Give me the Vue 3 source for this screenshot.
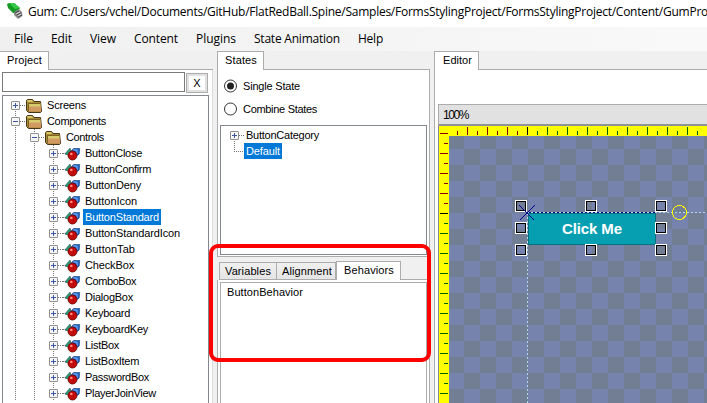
<script setup>
const menu = [
  { t: 'File', w: 19, g: 18 }, { t: 'Edit', w: 21, g: 18 }, { t: 'View', w: 26, g: 18 },
  { t: 'Content', w: 44, g: 18 }, { t: 'Plugins', w: 40, g: 18 },
  { t: 'State Animation', w: 86, g: 18 }, { t: 'Help', w: 25, g: 0 }
]
const tree = [
  { t: 'Screens', d: 0, w: 39, folder: true, first: true },
  { t: 'Components', d: 0, w: 59, folder: true, open: true },
  { t: 'Controls', d: 1, w: 38, folder: true, open: true },
  ...[['ButtonClose', 57], ['ButtonConfirm', 66], ['ButtonDeny', 56], ['ButtonIcon', 52],
    ['ButtonStandard', 74], ['ButtonStandardIcon', 95], ['ButtonTab', 50], ['CheckBox', 49],
    ['ComboBox', 51], ['DialogBox', 48], ['Keyboard', 45], ['KeyboardKey', 63], ['ListBox', 34],
    ['ListBoxItem', 54], ['PasswordBox', 64], ['PlayerJoinView', 71]].map(([t, w]) => ({ t, d: 2, w, sel: t === 'ButtonStandard' }))
]
// Spreads the letters so that a label takes the given width.
const vFit = {
  mounted(el, { value }) {
    const w = el.getBoundingClientRect().width
    el.style.letterSpacing = (value - w) / el.textContent.length + 'px'
  }
}
const tone = n => (n < 0 ? '#8b0000' : n > 0 ? '#006400' : '#000')
const ticks = (from, to) => Array.from({ length: to - from + 1 }, (_, i) => {
  const n = from + i
  return { n, at: n * 10, major: n % 2 === 0, c: tone(n) }
})
const xt = ticks(-7, 17)
const yt = ticks(-8, 18)
const handles = [[515, 200], [585, 200], [655, 200], [515, 222], [655, 222], [515, 244], [585, 244], [655, 244]]
</script>

<template>
  <div class="app">
    <header class="title">
      <svg width="17" height="18" viewBox="0 0 17 18">
        <path d="M0 2 L2 1 L7 1 L13 6 L9 12 L6 11 L1 6 Z" fill="#129a22" />
        <path d="M2 1 L7 1 L13 6 L8 7 Z" fill="#35c845" />
        <path d="M7 10 L12 7 L15 10 L15.500 14 L11 17 L7 13 Z" fill="#8c8c8c" />
        <path d="M8 11 L12 9 M9 13 L14 11 M11 15 L15 13" stroke="#444" />
        <path d="M9 12 L13 10 M11 14 L14 12" stroke="#ddd" />
      </svg>
      <span v-fit="680" class="fit">Gum: C:/Users/vchel/Documents/GitHub/FlatRedBall.Spine/Samples/FormsStylingProject/FormsStylingProject/Content/GumPro</span>
    </header>
    <nav class="menu">
      <span v-for="m in menu" :key="m.t" v-fit="m.w" class="fit" :style="{ marginRight: m.g + 'px' }">{{ m.t }}</span>
    </nav>
    <main class="body">
      <section class="col project">
        <div class="tabs"><div class="tab t1"><span v-fit="35" class="fit">Project</span></div><i /></div>
        <div class="panel">
          <div class="search">
            <div class="input" />
            <div class="clear"><b>X</b></div>
          </div>
          <div class="tree">
            <div v-for="r in tree" :key="r.t" class="row">
              <svg v-for="k in r.d" :key="k" width="19" height="16"><path d="M9.5 0V16" class="dot" /></svg>
              <svg width="19" height="16">
                <path :d="r.first ? 'M9.5 12V16' : 'M9.5 0V16'" class="dot" />
                <path d="M14 8.5H19" class="dot" />
                <rect x="5.5" y="4.5" width="8" height="8" rx=".5" fill="#f6f6f6" stroke="#919191" />
                <path :d="r.open ? 'M7 8.5H12' : 'M7 8.5H12M9.5 6V11'" stroke="#3b56a0" />
              </svg>
              <svg v-if="r.folder" width="20" height="16">
                <path d="M1.5 3.5L2.5 2.5H7.500L9 4.500H15.500L16.500 14.500L15.500 15.500H3.500L1.500 13.500Z" fill="#a58a35" stroke="#4a3616" />
                <path d="M2.500 3H7L8 5H2.500Z" fill="#d9c766" />
                <path d="M4 6H15.500V10H4Z" fill="#d8cb6d" />
                <path d="M4 9.500H16V14.500H4Z" fill="#d29a63" />
                <path d="M3.500 14.500V6.500H15.500" fill="none" stroke="#7c6324" />
              </svg>
              <svg v-else width="20" height="16">
                <path d="M0 8.5H2" class="dot" />
                <path d="M1.800 9L7 3.200L8.500 9L6 10Z" fill="#2f9f7a" stroke="#124f40" stroke-width=".7" />
                <path d="M8.500 5.500L10.500 3.500H16.700L16.200 9L13.500 11H9Z" fill="#1f66cc" stroke="#12346f" stroke-width=".6" />
                <path d="M10 5H14V9" stroke="#7db8f2" fill="none" />
                <circle cx="9.500" cy="10.500" r="4.500" fill="#c40a0a" stroke="#5d0505" stroke-width=".8" />
                <circle cx="8.300" cy="9" r="1.300" fill="#ff8a80" />
              </svg>
              <div class="label" :class="{ sel: r.sel }"><span v-fit="r.w" class="fit">{{ r.t }}</span></div>
            </div>
          </div>
        </div>
      </section>

      <section class="col middle">
        <div class="tabs"><div class="tab t2"><span v-fit="32" class="fit">States</span></div><i /></div>
        <div class="panel states">
          <div class="radio"><svg width="14" height="14"><circle cx="6.500" cy="7" r="6" fill="#fff" stroke="#333" /><circle cx="6.500" cy="7" r="3.500" fill="#222" /></svg><span v-fit="57" class="fit">Single State</span></div>
          <div class="radio"><svg width="14" height="14"><circle cx="6.500" cy="7" r="6" fill="#fff" stroke="#333" /></svg><span v-fit="74" class="fit">Combine States</span></div>
          <div class="list">
            <div class="row">
              <svg width="23" height="16">
                <path d="M13.500 12V16M18 8.500H23" class="dot" />
                <rect x="9.500" y="4.500" width="8" height="8" rx=".5" fill="#f6f6f6" stroke="#919191" />
                <path d="M11 8.500H16M13.500 6V11" stroke="#3b56a0" />
              </svg>
              <div class="label"><span v-fit="73" class="fit">ButtonCategory</span></div>
            </div>
            <div class="row">
              <svg width="23" height="16"><path d="M13.500 0V8.500H23" class="dot" /></svg>
              <div class="label sel"><span v-fit="34" class="fit">Default</span></div>
            </div>
          </div>
        </div>
        <div class="tabs low">
          <div class="off o1"><span v-fit="46" class="fit">Variables</span></div>
          <div class="off o2"><span v-fit="50" class="fit">Alignment</span></div>
          <div class="tab t4"><span v-fit="50" class="fit">Behaviors</span></div><i />
        </div>
        <div class="panel behaviors"><div class="box"><span v-fit="76" class="fit">ButtonBehavior</span></div></div>
      </section>

      <section class="col editor">
        <div class="tabs"><div class="tab t3"><span v-fit="29" class="fit">Editor</span></div><i /></div>
        <div class="panel edit">
          <div class="zoom"><span v-fit="25" class="fit">100%</span></div>
          <svg class="canvas" width="269" height="277" viewBox="438 126 269 277" shape-rendering="crispEdges">
            <defs>
              <pattern id="chk" x="448" y="133" width="32" height="32" patternUnits="userSpaceOnUse">
                <rect width="32" height="32" fill="#7683ad" />
                <rect width="16" height="16" fill="#727e94" /><rect x="16" y="16" width="16" height="16" fill="#727e94" />
              </pattern>
            </defs>
            <rect x="438" y="126" width="269" height="277" fill="url(#chk)" />
            <rect x="438" y="126" width="1" height="277" fill="#828790" />
            <rect x="439" y="126" width="268" height="10" fill="#ff0" />
            <rect x="439" y="126" width="10" height="277" fill="#ff0" />
            <rect v-for="k in xt" :key="'x' + k.n" :x="527 + k.at" :y="k.major ? 127 : 131" width="1" :height="k.major ? 8 : 4" :fill="k.c" />
            <rect v-for="k in yt" :key="'y' + k.n" :y="213 + k.at" :x="k.major ? 440 : 444" height="1" :width="k.major ? 8 : 4" :fill="k.c" />
            <rect x="528.5" y="213.5" width="127" height="31" fill="#069fb2" stroke="#05707e" />
            <path d="M527 212.500H656" stroke="#00008b" />
            <path d="M527 212.500H707M527.500 213V403" stroke="#add8e6" stroke-dasharray="2 2" />
            <g v-for="h in handles" :key="h.join()" fill="none">
              <rect :x="h[0] + .5" :y="h[1] + .5" width="11" height="11" stroke="#fff" />
              <rect :x="h[0] + 1.5" :y="h[1] + 1.5" width="9" height="9" stroke="#000" />
            </g>
            <path d="M519 205L534 220" stroke="#00008b" />
            <path d="M520 220L535 205" stroke="#00008b" stroke-width="1.400" />
            <circle cx="679.500" cy="212.500" r="7" fill="none" stroke="#ff0" />
            <text x="592" y="234" text-anchor="middle" textLength="60" class="click">Click Me</text>
          </svg>
        </div>
      </section>
    </main>
    <div class="callout" />
  </div>
</template>

<style>
body { overflow: hidden; }
</style>

<style scoped>
* { box-sizing: border-box; }
.app { position: relative; width: 707px; height: 403px; overflow: hidden; background: #f0f0f0; color: #000; font: 11px/16px "Liberation Sans", Arial, sans-serif; display: flex; flex-direction: column; }
svg { display: block; flex: none; }
.fit { display: inline-block; white-space: nowrap; flex: none; }
.title { height: 27px; flex: none; background: #fff; display: flex; padding: 2px 0 0 7px; gap: 4px; font: 12px/20px "Open Sans", "Noto Sans", sans-serif; }
.menu { height: 24px; flex: none; padding-left: 14px; display: flex; background: linear-gradient(90deg, #f0f0f0, #f9f9f9); font: 12px/24px "Open Sans", "Noto Sans", sans-serif; }
.body { flex: 1; min-height: 0; display: flex; }
.col { display: flex; flex-direction: column; flex: none; }
.project { width: 213px; margin-right: 4px; }
.middle { width: 213px; margin-right: 4px; }
.editor { width: 273px; }
.tabs { display: flex; height: 19px; flex: none; }
.tabs i { flex: 1; border-bottom: 1px solid #acacac; }
.tab { background: #fff; border: 1px solid #acacac; border-bottom: 0; line-height: 16px; height: 19px; }
.t1 { width: 49px; padding-left: 7px; border-left: 0; }
.t2 { width: 47px; padding-left: 7px; }
.t3 { width: 45px; padding-left: 8px; }
.t4 { width: 65px; padding-left: 7px; }
.panel { background: #fff; border: 1px solid #dcdcdc; border-width: 0 1px; }
.project .panel { flex: 1; border-left: 0; padding: 2px 3px 0 2px; min-height: 0; display: flex; flex-direction: column; }
.search { display: flex; height: 23px; gap: 1px; flex: none; }
.input { width: 183px; height: 20px; border: 1px solid #7a7a7a; }
.clear { width: 22px; height: 20px; margin-top: 1px; border: 1px solid #adadad; background: #e1e1e1; padding: 2px; }
.clear b { display: block; background: #fff; text-align: center; font-weight: normal; line-height: 15px; height: 14px; }
.tree { width: 207px; flex: 1; border: 1px solid #828790; border-bottom: 0; padding: 1px 0 0 3px; overflow: hidden; }
.row { display: flex; height: 16px; }
.label { height: 16px; padding: 0 2px; line-height: 16px; }
.sel { background: #0078d7; color: #fff; }
.dot { stroke: #777; stroke-dasharray: 1 1; fill: none; shape-rendering: crispEdges; }
.states { height: 187px; border-color: #acacac; border-bottom: 1px solid #acacac; padding: 4px 2px 0; flex: none; }
.radio { display: flex; align-items: center; height: 23px; padding-left: 4px; gap: 5px; }
.list { margin-top: 5px; height: 130px; border: 1px solid #828790; padding-top: 1px; }
.low { margin-top: 4px; height: 19px; padding-left: 2px; align-items: flex-end; position: relative; }
.off { height: 18px; border: 1px solid #acacac; background: linear-gradient(#f0f0f0, #e5e5e5); line-height: 16px; }
.o1 { width: 58px; padding-left: 5px; }
.o2 { width: 59px; padding-left: 5px; border-left: 0; }
.behaviors { flex: 1; border-color: #acacac; padding: 2px 2px 0; }
.box { height: 100%; border: 1px solid #acacac; border-bottom: 0; padding: 1px 0 0 6px; }
.edit { flex: 1; border-color: #acacac; border-right: 0; padding: 34px 0 0 3px; }
.zoom { height: 22px; border: 1px solid #acacac; border-right: 0; border-bottom: 2px solid #8f9298; background: #e1e1e1; padding: 2px 0 0 4px; font-size: 12px; }
.click { font: bold 15px "Liberation Sans", Arial, sans-serif; fill: #fff; }
.callout { position: absolute; left: 209px; top: 244px; width: 222px; height: 118px; border: 4px solid #fe0000; border-radius: 9px; }
</style>
